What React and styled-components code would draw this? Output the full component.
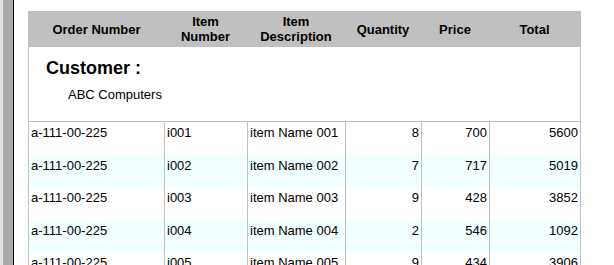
import React from "react";
import styled, { createGlobalStyle } from "styled-components";

const Global = createGlobalStyle`
  html, body { margin: 0; padding: 0; background: #fff; }
  body { font-family: "Liberation Sans", Arial, sans-serif; color: #000; }
`;

const Page = styled.div`
  display: flex;
  min-height: 100vh;
  background: #fff;
`;

const Frame = styled.div`
  width: 10px;
  flex: none;
  background: #a9a9a9;
  border-left: 3px solid #e2e2e2;
  border-right: 1px solid #000;
`;

const Content = styled.div`
  padding: 11px 0 0 14px;
`;

const Table = styled.div`
  width: 553px;
  display: flex;
  flex-direction: column;
`;

const cols = "135px 83px 98px 76px 68px 91px";

const HeaderRow = styled.div`
  display: grid;
  grid-template-columns: ${cols};
  height: 36px;
  background: #c0c0c0;
  padding: 0 1px;
`;

const HeadCell = styled.div`
  display: flex;
  align-items: center;
  justify-content: center;
  text-align: center;
  font-weight: bold;
  font-size: 13px;
  line-height: 15px;
  color: #000;
`;

const Body = styled.div`
  border-left: 1px solid #c0c0c0;
  border-right: 1px solid #c0c0c0;
`;

const CustomerBlock = styled.div`
  height: 75px;
  border-bottom: 1px solid #c0c0c0;
  padding: 11px 0 0 17px;
  box-sizing: border-box;
`;

const CustomerTitle = styled.div`
  font-size: 18px;
  line-height: 20px;
  font-weight: bold;
`;

const CustomerName = styled.div`
  font-size: 13px;
  line-height: 15px;
  margin: 9px 0 0 22px;
`;

const Row = styled.div`
  display: grid;
  grid-template-columns: ${cols};
  height: 32.5px;
  background: ${(p) => (p.$alt ? "#f0ffff" : "#fff")};
`;

const Cell = styled.div`
  font-size: 13px;
  line-height: 16px;
  padding: 3px 2px 0 2px;
  text-align: ${(p) => (p.$num ? "right" : "left")};
  border-left: ${(p) => (p.$first ? "none" : "1px solid #c0c0c0")};
  white-space: nowrap;
  overflow: hidden;
`;

const rows = [
  ["a-111-00-225", "i001", "item Name 001", 8, 700, 5600],
  ["a-111-00-225", "i002", "item Name 002", 7, 717, 5019],
  ["a-111-00-225", "i003", "item Name 003", 9, 428, 3852],
  ["a-111-00-225", "i004", "item Name 004", 2, 546, 1092],
  ["a-111-00-225", "i005", "item Name 005", 9, 434, 3906],
  ["a-111-00-225", "i006", "item Name 006", 4, 512, 2048],
];

export default function App() {
  return (
    <Page>
      <Global />
      <Frame />
      <Content>
        <Table>
          <HeaderRow>
            <HeadCell>Order Number</HeadCell>
            <HeadCell>Item<br />Number</HeadCell>
            <HeadCell>Item<br />Description</HeadCell>
            <HeadCell>Quantity</HeadCell>
            <HeadCell>Price</HeadCell>
            <HeadCell>Total</HeadCell>
          </HeaderRow>
          <Body>
            <CustomerBlock>
              <CustomerTitle>Customer :</CustomerTitle>
              <CustomerName>ABC Computers</CustomerName>
            </CustomerBlock>
            {rows.map((r, i) => (
              <Row key={i} $alt={i % 2 === 1}>
                <Cell $first>{r[0]}</Cell>
                <Cell>{r[1]}</Cell>
                <Cell>{r[2]}</Cell>
                <Cell $num>{r[3]}</Cell>
                <Cell $num>{r[4]}</Cell>
                <Cell $num>{r[5]}</Cell>
              </Row>
            ))}
          </Body>
        </Table>
      </Content>
    </Page>
  );
}
